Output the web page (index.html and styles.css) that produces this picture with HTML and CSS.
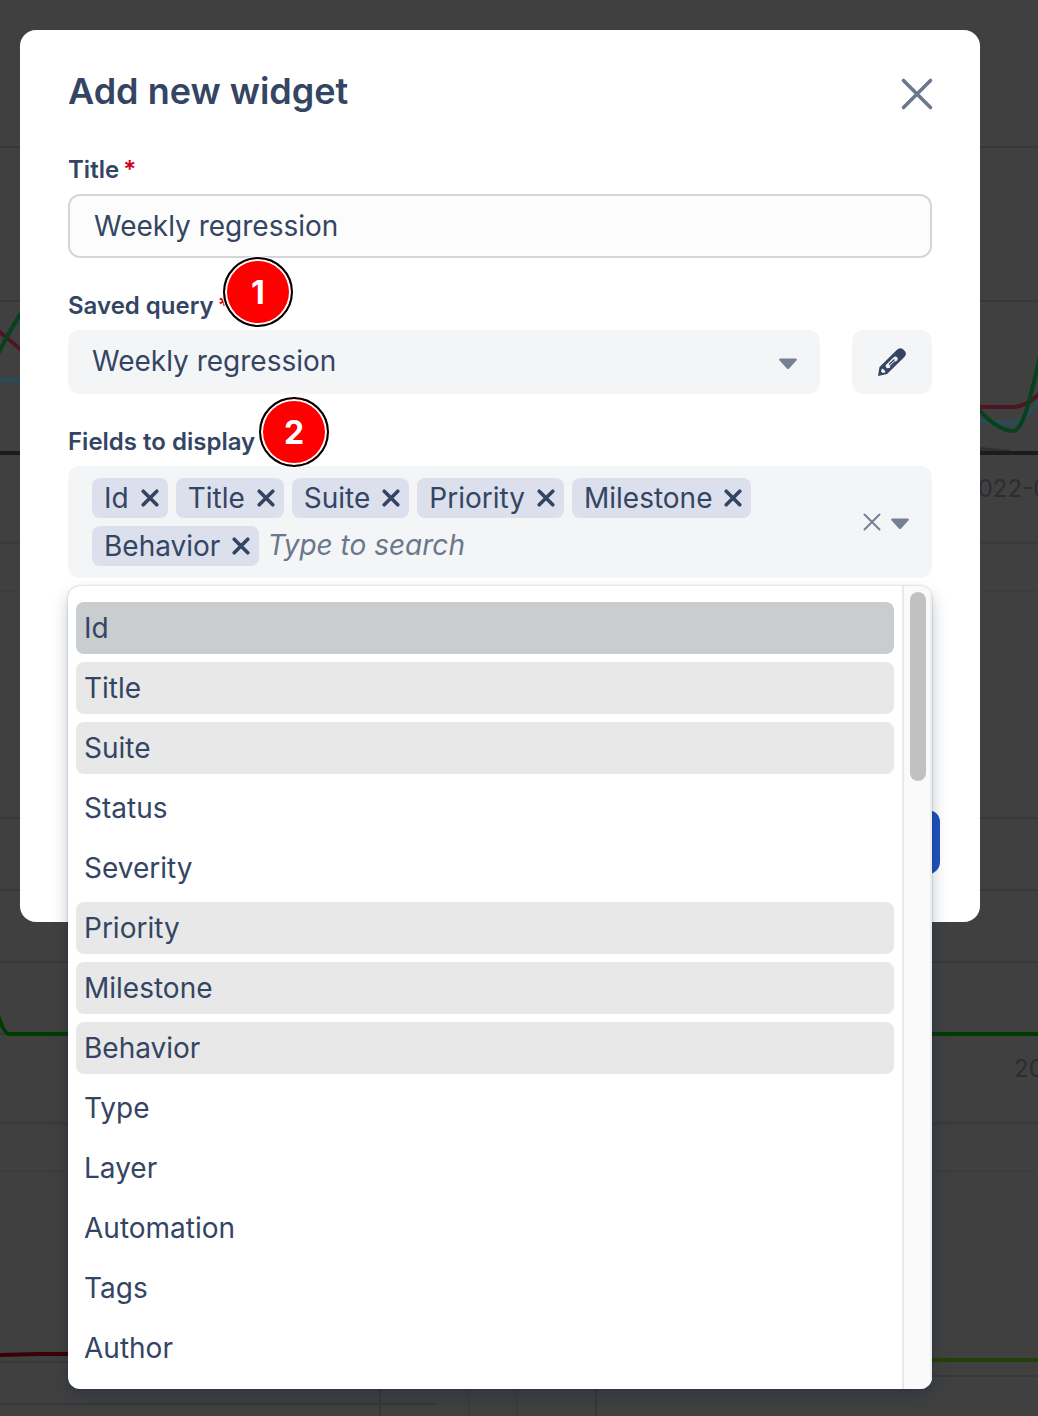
FILE: index.html
```html
<!DOCTYPE html>
<html lang="en">
<head>
<meta charset="utf-8">
<meta name="viewport" content="width=device-width, initial-scale=1">
<title>Add new widget</title>
<link rel="stylesheet" href="styles.css">
</head>
<body>
<svg class="symbols" aria-hidden="true">
  <symbol id="cross" viewBox="0 0 20 20"><path d="M2.5 2.5l15 15M17.5 2.5l-15 15" fill="none" stroke="currentColor" stroke-linecap="round"/></symbol>
  <symbol id="caret" viewBox="0 0 18 12"><path d="M1 .5h16q1 .2 .8 1.500L10.200 10.600q-1.200 1-2.400 0L.2 2Q0 .7 1 .5z" fill="currentColor"/></symbol>
</svg>

<div class="backdrop" aria-hidden="true">
  <svg class="chart-left" width="640" height="1416" viewBox="0 0 640 1416">
    <g class="grid">
      <path d="M0 147H68M0 301H68M0 818H68M0 890H68M0 962H68M0 1034H68M0 1362H68M0 1404H436M380 1380V1416M596 1380V1416"/>
    </g>
    <path class="faint" d="M0 591H68M0 1171H68M469 1380V1416M517 1380V1416"/>
    <path class="edge" d="M0 543H68M0 1123H68"/>
    <path class="axis" d="M0 453H68"/>
    <path class="blue" d="M0 379L24 382"/>
    <path class="red" d="M-4 329L24 352"/>
    <path class="green" d="M-2 354Q12 326 24 309"/>
    <path class="pass" d="M-2 1015Q4 1034 9 1034H68"/>
    <path class="fail" d="M0 1355L40 1354H68"/>
  </svg>
  <svg class="chart-right" width="138" height="1416" viewBox="900 0 138 1416">
    <g class="grid">
      <path d="M930 147H1038M930 301H1038M930 818H1038M930 890H1038M930 962H1038M930 1376H1038"/>
    </g>
    <path class="faint" d="M930 591H1038M930 1171H1038"/>
    <path class="edge" d="M930 543H1038M930 1123H1038"/>
    <path class="gray" d="M970 448L1010 452"/>
    <path class="axis" d="M930 453H1038"/>
    <path class="blue" d="M970 418Q990 423 1012 423Q1024 422 1040 400"/>
    <path class="red" d="M970 407H1012Q1026 407 1040 393"/>
    <path class="green" d="M970 400C985 418 1000 431 1013 431C1024 431 1032 390 1040 356"/>
    <path class="pass" d="M930 1034H1038"/>
    <path class="olive" d="M930 1360H1038"/>
    <text x="963" y="497">2022-0</text>
    <text x="1014" y="1077">20</text>
  </svg>
</div>

<main class="modal" role="dialog" aria-labelledby="heading">
  <header class="modal-header">
    <h1 id="heading">Add new widget</h1>
    <button class="icon-button close" type="button" aria-label="Close"><svg><use href="#cross"/></svg></button>
  </header>

  <form class="form">
    <div class="field">
      <div class="label-row"><label for="title">Title</label><span class="required">*</span></div>
      <input class="text-input" id="title" type="text" value="Weekly regression">
    </div>

    <div class="field">
      <div class="label-row"><label for="query">Saved query</label><span class="required">*</span><span class="marker marker-one">1</span></div>
      <div class="query-row">
        <div class="select-wrap">
          <select id="query"><option>Weekly regression</option></select>
          <svg class="caret"><use href="#caret"/></svg>
        </div>
        <button class="edit" type="button" aria-label="Edit query">
          <svg viewBox="0 0 28 28"><path d="M0 28L1.500 19L19 1.800Q21.500-.8 24.500 .8L27.200 3.500Q29 6.500 26.400 9L9 26Z" fill="#344563"/><path d="M7.400 17.500L16.200 8.800Q17.500 8 18.800 9L19.500 9.700Q20.400 11 19.200 12.200L11.400 20L8.600 20.200ZM4 20.500L6.400 22L7.600 24.300L4.800 25.100L3 23.500Z" fill="#f4f5f7"/><path d="M11 16.500L16.500 11.500M12 18.500L17.500 13.500" stroke="#344563" stroke-width="1.300" fill="none"/></svg>
        </button>
      </div>
    </div>

    <div class="field">
      <div class="label-row"><label for="fields">Fields to display</label><span class="marker marker-two">2</span></div>
      <div class="combo">
        <div class="chips">
          <span class="chip">Id<button class="icon-button" type="button" aria-label="Remove Id"><svg><use href="#cross"/></svg></button></span>
          <span class="chip">Title<button class="icon-button" type="button" aria-label="Remove Title"><svg><use href="#cross"/></svg></button></span>
          <span class="chip">Suite<button class="icon-button" type="button" aria-label="Remove Suite"><svg><use href="#cross"/></svg></button></span>
          <span class="chip">Priority<button class="icon-button" type="button" aria-label="Remove Priority"><svg><use href="#cross"/></svg></button></span>
          <span class="chip">Milestone<button class="icon-button" type="button" aria-label="Remove Milestone"><svg><use href="#cross"/></svg></button></span>
          <span class="chip">Behavior<button class="icon-button" type="button" aria-label="Remove Behavior"><svg><use href="#cross"/></svg></button></span>
          <input class="search" id="fields" type="text" placeholder="Type to search">
        </div>
        <div class="combo-actions">
          <button class="icon-button" type="button" aria-label="Clear all"><svg><use href="#cross"/></svg></button>
          <button class="icon-button" type="button" aria-label="Toggle list"><svg class="caret"><use href="#caret"/></svg></button>
        </div>
        <div class="dropdown">
          <ul class="options" role="listbox" aria-label="Fields to display">
            <li class="active" role="option" aria-selected="true">Id</li>
            <li class="selected" role="option" aria-selected="true">Title</li>
            <li class="selected" role="option" aria-selected="true">Suite</li>
            <li role="option">Status</li>
            <li role="option">Severity</li>
            <li class="selected" role="option" aria-selected="true">Priority</li>
            <li class="selected" role="option" aria-selected="true">Milestone</li>
            <li class="selected" role="option" aria-selected="true">Behavior</li>
            <li role="option">Type</li>
            <li role="option">Layer</li>
            <li role="option">Automation</li>
            <li role="option">Tags</li>
            <li role="option">Author</li>
          </ul>
          <div class="track"><div class="thumb"></div></div>
        </div>
      </div>
    </div>

    <footer class="modal-footer"><button class="submit" type="submit" aria-label="Add"></button></footer>
  </form>
</main>
</body>
</html>
```
FILE: styles.css
```css
* { box-sizing: border-box; }

body {
  position: relative;
  margin: 0;
  padding: 30px 58px 0 20px;
  min-height: 1416px;
  background: #404040;
  color: #344563;
  font: 28px/40px Inter, "Liberation Sans", sans-serif;
}

button, input, select { font: inherit; color: inherit; }
button { padding: 0; border: 0; cursor: pointer; }

.symbols { position: absolute; width: 0; height: 0; }

/* dimmed dashboard behind the dialog */
.backdrop {
  position: absolute;
  inset: 0;
  overflow: hidden;
}
.backdrop svg { position: absolute; top: 0; }
.backdrop path { fill: none; stroke-width: 4px; }
.backdrop text { fill: #2a2d32; font-size: 24px; }
.chart-left { left: 0; }
.chart-right { right: 0; }
.backdrop .grid path { stroke: #383838; stroke-width: 2px; }
.backdrop .faint { stroke: #3d3d3d; stroke-width: 2px; }
.backdrop .edge { stroke: #3a3a3a; stroke-width: 3px; }
.axis { stroke: #1c1c1f; }
.gray { stroke: #303030; }
.blue { stroke: #294c59; }
.red { stroke: #501522; }
.green { stroke: #06401c; }
.pass { stroke: #003c00; }
.fail { stroke: #390008; }
.olive { stroke: #263f0a; }

.modal {
  position: relative;
  padding: 40px 48px 48px;
  border-radius: 16px;
  background: #fff;
}

.modal-header {
  display: flex;
  justify-content: space-between;
  align-items: center;
  margin-bottom: 40px;
}
h1 {
  margin: 0;
  padding-bottom: 2px;
  font-size: 36px;
  line-height: 42px;
  font-weight: 600;
}

.icon-button {
  display: flex;
  background: none;
}
.icon-button svg { width: 20px; height: 20px; stroke-width: 3px; }
.chip .icon-button svg { stroke-width: 4px; padding: 1px; }
.close { color: #6b778c; padding-top: 4px; }
.close svg { width: 36px; height: 36px; margin: 0 -3px; stroke-width: 2px; }

.form, .field { display: flex; flex-direction: column; }
.form { gap: 32px; }
.field { gap: 8px; }

.label-row {
  position: relative;
  display: flex;
  gap: 4px;
  font-size: 24px;
  line-height: 32px;
  font-weight: 600;
}
.required { color: #d0021b; }

/* numbered callouts */
.marker {
  position: absolute;
  z-index: 1;
  width: 70px;
  height: 70px;
  border: 2px solid #000;
  border-radius: 50%;
  background: #f00;
  box-shadow: inset 0 0 0 2px #fff, 0 0 0 1px #fff;
  color: #fff;
  font-size: 32px;
  line-height: 68px;
  font-weight: 700;
  text-align: center;
}
.marker-one { top: -33px; left: 155px; }
.marker-two { top: -29px; left: 191px; }

.text-input {
  width: 100%;
  height: 64px;
  padding: 0 24px;
  border: 2px solid #d1d6dd;
  border-radius: 12px;
  background: #fcfcfc;
}

.query-row { display: flex; gap: 32px; }
.select-wrap {
  display: grid;
  flex: 1;
  align-items: center;
}
.select-wrap > * { grid-area: 1 / 1; }
.select-wrap .caret { justify-self: end; margin-right: 23px; pointer-events: none; }
select {
  width: 100%;
  height: 64px;
  padding: 0 24px 2px;
  border: 0;
  border-radius: 12px;
  background: #f4f5f7;
  appearance: none;
}
svg.caret { width: 18px; height: 12px; color: #758096; margin-top: 3px; }

.edit {
  display: flex;
  align-items: center;
  justify-content: center;
  width: 80px;
  height: 64px;
  border-radius: 12px;
  background: #f4f5f7;
}
.edit svg { width: 28px; height: 28px; }

.combo {
  position: relative;
  display: flex;
  align-items: center;
  justify-content: space-between;
  gap: 24px;
  padding: 12px 23px 12px 24px;
  border-radius: 12px;
  background: #f4f5f7;
}
.chips {
  display: flex;
  flex: 1;
  flex-wrap: wrap;
  gap: 8px;
}
.chip {
  display: flex;
  align-items: center;
  gap: 11px;
  height: 40px;
  padding: 0 8px 0 12px;
  border-radius: 8px;
  background: #dbe0ec;
}
.search {
  width: 240px;
  height: 40px;
  padding: 0 0 2px;
  border: 0;
  background: none;
}
.search::placeholder { color: #6b778c; font-style: italic; opacity: 1; }
.combo-actions {
  display: flex;
  align-items: center;
  gap: 9px;
  color: #758096;
}
.combo-actions svg { stroke-width: 2px; }
.combo-actions svg.caret { width: 18px; height: 12px; }

.dropdown {
  position: absolute;
  top: calc(100% + 8px);
  left: 0;
  right: 0;
  display: flex;
  border-radius: 12px;
  background: #fff;
  overflow: hidden;
  box-shadow: 0 0 2px rgba(9, 30, 66, .31), 0 8px 16px rgba(9, 30, 66, .25);
}
.options {
  display: flex;
  flex: 1;
  flex-direction: column;
  gap: 8px;
  margin: 0;
  padding: 16px 8px 15px;
  list-style: none;
}
.options li {
  height: 52px;
  padding: 0 8px;
  border-radius: 8px;
  line-height: 52px;
}
.options .selected { background: #e8e8e8; }
.options .active { background: #c9cdd0; }
.track {
  width: 30px;
  padding: 6px 4px 0 6px;
  border: solid #e8e8e8;
  border-width: 0 2px;
  border-right-color: #ededed;
  background: #fafafa;
}
.thumb { height: 189px; width: 16px; border-radius: 8px; background: #c1c1c1; }

.modal-footer {
  display: flex;
  justify-content: flex-end;
  margin: 200px -8px 0 0;
}
.submit {
  width: 160px;
  height: 64px;
  border-radius: 12px;
  background: #1d52bf;
}
```
